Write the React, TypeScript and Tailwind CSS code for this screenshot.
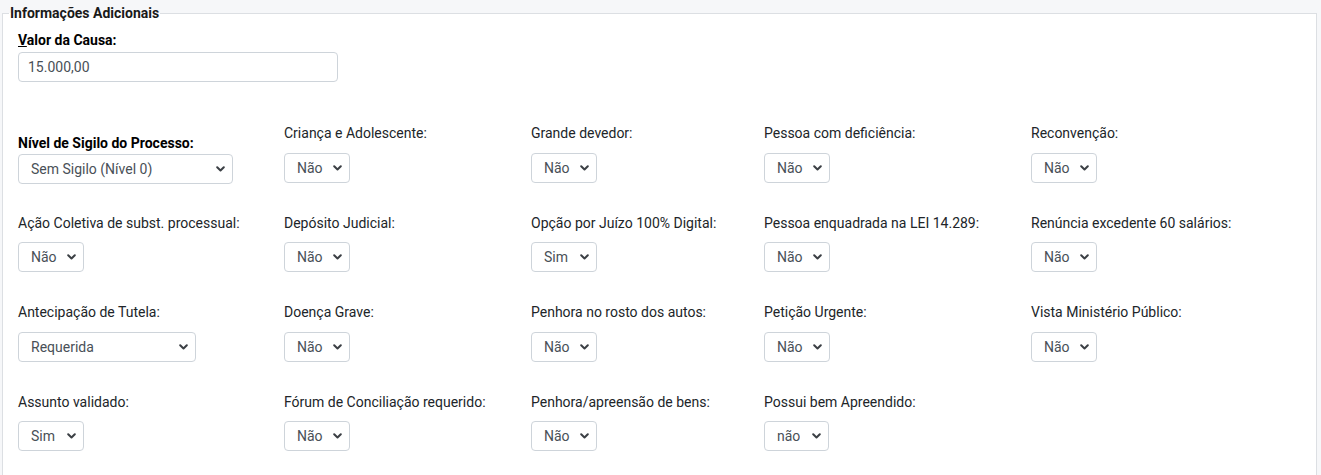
import React from 'react';

interface Field {
  label: string;
  value: string;
  width: string;
  bold?: boolean;
}

const columns: Field[][] = [
  [
    { label: 'Nível de Sigilo do Processo:', value: 'Sem Sigilo (Nível 0)', width: 'w-[215px]', bold: true },
    { label: 'Ação Coletiva de subst. processual:', value: 'Não', width: 'w-[66px]' },
    { label: 'Antecipação de Tutela:', value: 'Requerida', width: 'w-[178px]' },
    { label: 'Assunto validado:', value: 'Sim', width: 'w-[66px]' },
  ],
  [
    { label: 'Criança e Adolescente:', value: 'Não', width: 'w-[66px]' },
    { label: 'Depósito Judicial:', value: 'Não', width: 'w-[66px]' },
    { label: 'Doença Grave:', value: 'Não', width: 'w-[66px]' },
    { label: 'Fórum de Conciliação requerido:', value: 'Não', width: 'w-[66px]' },
  ],
  [
    { label: 'Grande devedor:', value: 'Não', width: 'w-[66px]' },
    { label: 'Opção por Juízo 100% Digital:', value: 'Sim', width: 'w-[66px]' },
    { label: 'Penhora no rosto dos autos:', value: 'Não', width: 'w-[66px]' },
    { label: 'Penhora/apreensão de bens:', value: 'Não', width: 'w-[66px]' },
  ],
  [
    { label: 'Pessoa com deficiência:', value: 'Não', width: 'w-[66px]' },
    { label: 'Pessoa enquadrada na LEI 14.289:', value: 'Não', width: 'w-[66px]' },
    { label: 'Petição Urgente:', value: 'Não', width: 'w-[66px]' },
    { label: 'Possui bem Apreendido:', value: 'não', width: 'w-[65px]' },
  ],
  [
    { label: 'Reconvenção:', value: 'Não', width: 'w-[66px]' },
    { label: 'Renúncia excedente 60 salários:', value: 'Não', width: 'w-[66px]' },
    { label: 'Vista Ministério Público:', value: 'Não', width: 'w-[66px]' },
  ],
];

const Chevron = () => (
  <svg width="9" height="6" viewBox="0 0 9 6" className="shrink-0">
    <path d="M1.2 1.2l3.3 3.3 3.3-3.3" fill="none" stroke="#3b3f44" strokeWidth="2" strokeLinecap="round" strokeLinejoin="round" />
  </svg>
);

const FakeSelect = ({ value, width }: { value: string; width: string }) => (
  <div
    className={`${width} h-[30px] flex items-center justify-between pl-3 pr-[7px] border border-[#ced4da] rounded-[4px] bg-white text-[#495057]`}
  >
    <span className="truncate">{value}</span>
    <Chevron />
  </div>
);

const App: React.FC = () => {
  return (
    <div className="h-[475px] overflow-hidden bg-[#f6f7f9] pl-[2px] pr-[4px] pt-[3px] text-[14px] leading-5 text-[#212529] [font-family:Roboto,'Noto_Sans',sans-serif]">
      <fieldset className="border border-[#dcdfe3] bg-white h-[600px] p-0">
        <legend className="ml-[6px] px-px font-bold text-[#1a1a1a]">Informações Adicionais</legend>

        <div className="pl-[15px] pt-[7px]">
          <label className="block font-bold text-black mb-[2px]">
            <span className="underline">V</span>alor da Causa:
          </label>
          <div className="w-[320px] h-[30px] flex items-center pl-[9px] border border-[#ced4da] rounded-[4px] text-[#495057]">
            15.000,00
          </div>

          <div className="grid grid-cols-[266px_247px_233px_267px_1fr] mt-[41px]">
            {columns.map((col, ci) => (
              <div key={ci} className="flex flex-col">
                {col.map((f, ri) => (
                  <div key={ri} className={ri === 1 ? 'h-[89px]' : 'h-[90px]'}>
                    {f.bold ? (
                      <>
                        <div className="pt-[10px] font-bold text-black">{f.label}</div>
                        <div className="mt-px">
                          <FakeSelect value={f.value} width={f.width} />
                        </div>
                      </>
                    ) : (
                      <>
                        <div>{f.label}</div>
                        <div className={ri % 2 === 0 ? 'mt-[10px]' : 'mt-[9px]'}>
                          <FakeSelect value={f.value} width={f.width} />
                        </div>
                      </>
                    )}
                  </div>
                ))}
              </div>
            ))}
          </div>
        </div>
      </fieldset>
    </div>
  );
};

export default App;
